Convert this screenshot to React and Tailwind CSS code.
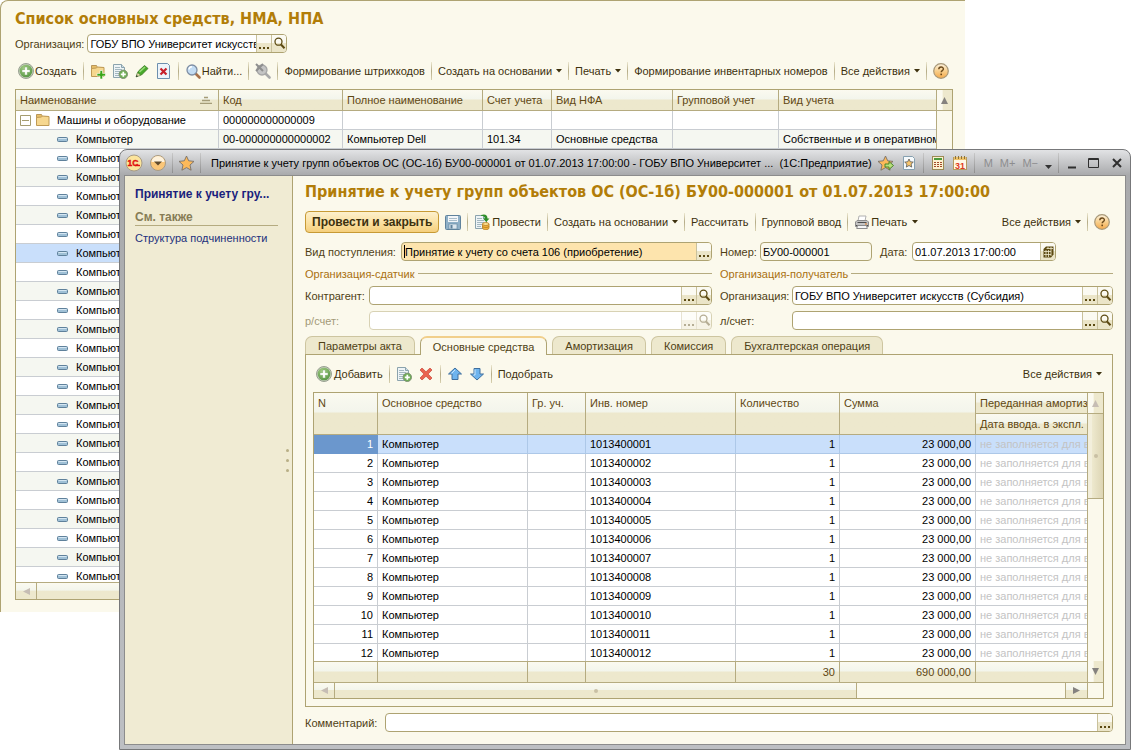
import React from 'react';

/* ---------- icons ---------- */

function PlusIcon() {
  return (
    <svg width="16" height="16" viewBox="0 0 16 16" className="shrink-0">
      <defs>
        <radialGradient id="plusG" cx="0.4" cy="0.3" r="0.8">
          <stop offset="0" stopColor="#a9d088" />
          <stop offset="1" stopColor="#4f9140" />
        </radialGradient>
      </defs>
      <circle cx="8" cy="8" r="7.5" fill="#c3cdb8" stroke="#99a192" />
      <circle cx="8" cy="8" r="6.3" fill="url(#plusG)" />
      <path d="M6.7 4h2.6v2.7H12v2.6H9.3V12H6.7V9.3H4V6.7h2.7z" fill="#fff" stroke="#5f9a4d" strokeWidth="0.4" />
    </svg>
  );
}

function FolderIcon({ plus }) {
  return (
    <svg width="16" height="16" viewBox="0 0 16 16" className="shrink-0">
      <path d="M1.5 12.5v-10h5l1 2h6v8z" fill="#e8bf68" stroke="#b8965a" />
      <path d="M1.5 13.5v-8l5-.5 1-1 6.5.5v9z" fill="#f6d78f" stroke="#bf9a55" />
      {plus && <path d="M10 7.5h2.6v2.9h2.9V13h-2.9v3H10v-3H7v-2.6h3z" fill="#3aa51a" stroke="#fff" strokeWidth="0.6" />}
    </svg>
  );
}

function DocLines({ children }) {
  return (
    <svg width="16" height="16" viewBox="0 0 16 16" className="shrink-0">
      <path d="M1.5 1.5h8l3 3v10h-11z" fill="#eef4f6" stroke="#8ba3ad" />
      <path d="M9.5 1.5v3h3" fill="#cfdde3" stroke="#8ba3ad" />
      <path d="M3 4.5h5M3 6.5h7M3 8.5h7M3 10.5h5M3 12.5h4" stroke="#a3b7c0" />
      {children}
    </svg>
  );
}

function DocPlusIcon() {
  return (
    <DocLines>
      <circle cx="11.3" cy="11.3" r="4.2" fill="#6fae55" stroke="#7f9275" />
      <path d="M11.3 8.8v5M8.8 11.3h5" stroke="#fff" strokeWidth="1.7" />
    </DocLines>
  );
}

function PostIcon() {
  return (
    <DocLines>
      <path d="M7 1c4-1.500 6.500 0 6.500 3.500h2L12.200 8 9 4.500h2C11 3 9.500 2 7 1.800z" fill="#2f8f28" />
      <path d="M8.500 10v4c0 2.200 6.500 2.200 6.500 0v-4z" fill="#efb23e" stroke="#b97c1d" strokeWidth="0.800" />
      <ellipse cx="11.750" cy="10" rx="3.250" ry="1.500" fill="#fbdd8f" stroke="#b97c1d" strokeWidth="0.800" />
      <path d="M8.500 12c0 2 6.500 2 6.500 0" fill="none" stroke="#b97c1d" strokeWidth="0.800" />
    </DocLines>
  );
}

function PencilIcon() {
  return (
    <svg width="16" height="16" viewBox="0 0 16 16" className="shrink-0">
      <path d="M3 11.500L4.500 8l6-5.500L14 5.500 7.500 12z" fill="#46a92a" stroke="#3a7a22" strokeWidth="0.800" />
      <path d="M5.500 9L11 4" stroke="#9bdc7c" strokeWidth="1.600" />
      <path d="M2 14l1.500-4.500L6.800 12.300z" fill="#e9d9b0" stroke="#3a7a22" strokeWidth="0.600" />
      <path d="M2 14l.7-1.900 1.300 1.100z" fill="#222" />
    </svg>
  );
}

function DeleteDocIcon() {
  return (
    <svg width="16" height="16" viewBox="0 0 16 16" className="shrink-0">
      <path d="M1.500 .5h10l2 2v13h-12z" fill="#edf4fa" stroke="#6d8fae" />
      <path d="M4.500 5.500l6 6M10.500 5.500l-6 6" stroke="#c8202a" strokeWidth="2.200" />
    </svg>
  );
}

function FindIcon({ muted }) {
  return (
    <svg width="16" height="16" viewBox="0 0 16 16" className="shrink-0">
      <path d="M10.500 10.500l4 4" stroke={muted ? '#a9a9a9' : '#a8714a'} strokeWidth="2.600" strokeLinecap="round" />
      <circle cx="7" cy="7" r="5" fill={muted ? '#c4c4c4' : '#c3dcf3'} stroke={muted ? '#a6a6a6' : '#7f8ea3'} strokeWidth="1.300" />
      {muted ? (
        <path d="M1 1l7 7M8 1L1 8" stroke="#8f8f8f" strokeWidth="2" />
      ) : (
        <path d="M4 6.500a3 3 0 0 1 3-2.700" stroke="#fff" strokeWidth="1.400" fill="none" />
      )}
    </svg>
  );
}

function HelpIcon() {
  return (
    <svg width="16" height="16" viewBox="0 0 16 16" className="shrink-0">
      <defs>
        <linearGradient id="helpG" x1="0" y1="0" x2="0" y2="1">
          <stop offset="0" stopColor="#fdf3df" />
          <stop offset="0.500" stopColor="#f8cf8c" />
          <stop offset="1" stopColor="#f5a94a" />
        </linearGradient>
      </defs>
      <circle cx="8" cy="8" r="7.300" fill="url(#helpG)" stroke="#a89878" strokeWidth="1.200" />
      <path d="M5.800 6.300c0-3 4.600-2.900 4.600-.3 0 1.600-2.200 1.600-2.200 3.300" stroke="#6b4a1c" strokeWidth="1.400" fill="none" />
      <rect x="7.400" y="10.600" width="1.600" height="1.600" fill="#6b4a1c" />
    </svg>
  );
}

function SaveIcon() {
  return (
    <svg width="16" height="16" viewBox="0 0 16 16" className="shrink-0">
      <rect x="0.500" y="1.500" width="15" height="14" rx="1" fill="#8fb0c7" stroke="#5f829c" />
      <rect x="3" y="2" width="10" height="6" fill="#f2f6f9" />
      <path d="M4 4.500h8M4 6.500h8" stroke="#a9bdca" />
      <rect x="4" y="10" width="8" height="5" fill="#dbe6ee" stroke="#5f829c" strokeWidth="0.600" />
      <rect x="5.500" y="11" width="2" height="3.500" fill="#5f829c" />
    </svg>
  );
}

function PrinterIcon() {
  return (
    <svg width="16" height="16" viewBox="0 0 16 16" className="shrink-0">
      <path d="M4 7l1-5h7l-1 5z" fill="#fff" stroke="#b0b0b0" />
      <path d="M1.500 8L3 6.500h10L14.500 8v4.500h-13z" fill="#c4c4c4" stroke="#8c8c8c" />
      <path d="M3.500 8.500h9M2 11.500h12" stroke="#4f4f4f" />
      <path d="M3.500 11.500h9l.8 3H2.700z" fill="#f6f6f6" stroke="#8c8c8c" />
      <rect x="11" y="9.500" width="2" height="1" fill="#e07a20" />
    </svg>
  );
}

function CrossIcon() {
  return (
    <svg width="16" height="16" viewBox="0 0 16 16" className="shrink-0">
      <path d="M2 4l2-2 4 3.800L12 2l2 2-3.900 4L14 12l-2 2-4-3.800L4 14l-2-2 3.900-4z" fill="#ea6350" stroke="#c9473a" strokeWidth="0.700" />
    </svg>
  );
}

function ArrowIcon({ down }) {
  return (
    <svg width="16" height="16" viewBox="0 0 16 16" className="shrink-0">
      <path
        d={down ? 'M8 14l-6.500-6H5V2.500h6V8h3.500z' : 'M8 2L1.500 8H5v5.500h6V8h3.500z'}
        fill="#6eb4ee"
        stroke="#3f6f9e"
        strokeLinejoin="round"
      />
      <path d={down ? 'M6 3.500V9H4.500' : 'M4.500 7.500L8 4'} stroke="#cbe6fb" fill="none" />
    </svg>
  );
}

function Lens() {
  return (
    <svg width="13" height="13" viewBox="0 0 13 13">
      <circle cx="5.500" cy="4.700" r="3.500" fill="none" stroke="currentColor" strokeWidth="1.300" />
      <path d="M8 7.500l3.500 3.800" stroke="currentColor" strokeWidth="2" />
    </svg>
  );
}

function CalendarGlyph() {
  return (
    <svg width="11" height="12" viewBox="0 0 11 12">
      <path d="M3 .5h7.500v8L8 11.500H.5V3z" fill="#5c4a12" />
      <path d="M1 5.500h7M1 8.500h7M3.500 2.500h6.500M3 4v7M5.500 4v7M5 1v2M8 1v9" stroke="#f3edd3" strokeWidth="0.800" />
    </svg>
  );
}

function Caret() {
  return (
    <svg width="6" height="4" viewBox="0 0 6 4" className="ml-1 shrink-0">
      <path d="M0 0h6L3 3.500z" fill="#3d310e" />
    </svg>
  );
}

function Star({ children, small }) {
  return (
    <svg width="17" height="16" viewBox="0 0 17 16" className="shrink-0">
      {small ? (
        <>
          <path d="M3.500 1.500h9l2 2v11h-11z" fill="#f6fafc" stroke="#86a0b0" />
          <path d="M9 4l1.300 2.800 3 .3-2.200 2 .6 3L9 10.500l-2.700 1.600.6-3-2.200-2 3-.3z" fill="#f8c56c" stroke="#555" strokeWidth="0.800" />
        </>
      ) : (
        <path d="M8.500 1l2.200 4.800 5.300.6-4 3.600 1.100 5.200-4.600-2.600-4.600 2.600L5 10 1 6.400l5.300-.6z" fill="#fcb95a" stroke="#77706a" strokeWidth="0.900" />
      )}
      {children}
    </svg>
  );
}

function ScrollArrow({ dir, muted }) {
  const d = { up: 'M4 0l4 8H0z', down: 'M4 8L0 0h8z', left: 'M0 4l8-4v8z', right: 'M8 4L0 8V0z' }[dir];
  return (
    <svg width="7" height="7" viewBox="0 0 8 8">
      <path d={d} fill={muted ? '#c6bdb4' : '#85827f'} />
    </svg>
  );
}

/* ---------- controls ---------- */

function Sep() {
  return <div className="h-[18px] w-px shrink-0 bg-linear-to-b from-[#ece7cf] via-[#b5ac88] to-[#d8d1b0]" />;
}

function Tool({ icon, label, caret, children, className = '' }) {
  return (
    <button type="button" aria-label={label} className={`flex h-5 shrink-0 items-center whitespace-nowrap text-[#3d310e] ${className}`}>
      {icon}
      {children && <span>{children}</span>}
      {caret && <Caret />}
    </button>
  );
}

const fieldButton =
  'flex h-full w-[15px] shrink-0 items-center justify-center border-l border-[#c9c19c] bg-linear-to-b from-[#fbfaf2] from-45% to-[#ebe5c8] to-50% text-[#5c4a12]';

function Dots() {
  return (
    <svg width="10" height="2" viewBox="0 0 10 2" className="mt-2">
      <path d="M0 0h2v2H0zM4 0h2v2H4zM8 0h2v2H8z" fill="currentColor" />
    </svg>
  );
}

function Field({ id, value = '', dots, lens, calendar, disabled, active, readOnly, className = '' }) {
  return (
    <div
      className={`flex h-[19px] min-w-0 items-center overflow-hidden rounded border ${
        disabled ? 'border-[#d8d2b4]' : 'border-[#aea372]'
      } ${active ? 'bg-[#fde4ad]' : readOnly ? 'bg-[#fbf9ec]' : 'bg-white'} ${className}`}
    >
      {active && <span className="ml-[2px] h-[13px] w-px bg-black" />}
      <input
        id={id}
        defaultValue={value}
        disabled={disabled}
        readOnly={readOnly}
        className={`h-full w-0 min-w-0 flex-1 bg-transparent text-black outline-none ${active ? '' : 'pl-[2px]'}`}
      />
      {dots && (
        <button type="button" disabled={disabled} aria-label="Выбрать" className={`${fieldButton} ${disabled ? 'opacity-45' : ''}`}>
          <Dots />
        </button>
      )}
      {lens && (
        <button type="button" disabled={disabled} aria-label="Открыть" className={`${fieldButton} ${disabled ? 'opacity-45' : ''}`}>
          <Lens />
        </button>
      )}
      {calendar && (
        <button type="button" aria-label="Календарь" className={fieldButton}>
          <CalendarGlyph />
        </button>
      )}
    </div>
  );
}

function Label({ id, children, className = '' }) {
  return (
    <label htmlFor={id} className={`shrink-0 whitespace-nowrap ${className}`}>
      {children}
    </label>
  );
}

const titleText = 'font-[DejaVu_Sans_Condensed,DejaVu_Sans,sans-serif] text-[16px] leading-6 font-bold whitespace-nowrap text-[#b27d08]';
const headFill = 'bg-linear-to-b from-[#fbfaf0] from-0% via-[#f3f5ec] via-45% to-[#ede8cd] to-50%';
const headCell = `${headFill} overflow-hidden whitespace-nowrap border-r border-b border-[#b5ab80] px-1 text-left font-normal text-[#5f4712]`;

/* ---------- list window ---------- */

const listColumns = ['Наименование', 'Код', 'Полное наименование', 'Счет учета', 'Вид НФА', 'Групповой учет', 'Вид учета'];
const listRows = Array.from({ length: 24 }, (_, i) => ({
  name: 'Компьютер',
  cells: i === 0 ? ['00-000000000000002', 'Компьютер Dell', '101.34', 'Основные средства', '', 'Собственные и в оперативном'] : ['', '', '', '', '', ''],
  selected: i === 6,
}));

function ListWindow() {
  const cell = 'h-[19px] overflow-hidden whitespace-nowrap border-r border-b border-[#c9cdd2] px-1';
  return (
    <section className="mr-[166px] rounded-tl-lg border-t border-l border-[#aea372] bg-[#fbf9ec] pt-[6px] pr-3 pb-3 pl-[14px]">
      <h1 className={titleText}>Список основных средств, НМА, НПА</h1>
      <div className="mt-[3px] flex items-center gap-[3px] text-[#4f3f14]">
        <Label id="org">Организация:</Label>
        <Field id="org" value="ГОБУ ВПО Университет искусств (Субсидия)" dots lens className="w-[200px]" />
      </div>
      <div className="mt-2 flex h-5 items-center gap-[6px] pl-[3px]">
        <Tool icon={<PlusIcon />} className="gap-[1px]">Создать</Tool>
        <Sep />
        <Tool icon={<FolderIcon plus />} label="Создать группу" />
        <Tool icon={<DocPlusIcon />} label="Скопировать" />
        <Tool icon={<PencilIcon />} label="Изменить" />
        <Tool icon={<DeleteDocIcon />} label="Пометить на удаление" />
        <Sep />
        <Tool icon={<FindIcon />} className="gap-[1px]">Найти...</Tool>
        <Sep />
        <Tool icon={<FindIcon muted />} label="Отменить поиск" />
        <Sep />
        <Tool>Формирование штрихкодов</Tool>
        <Sep />
        <Tool caret>Создать на основании</Tool>
        <Sep />
        <Tool caret>Печать</Tool>
        <Sep />
        <Tool>Формирование инвентарных номеров</Tool>
        <Sep />
        <Tool caret>Все действия</Tool>
        <Sep />
        <Tool icon={<HelpIcon />} label="Справка" />
      </div>
      <div className="mt-2 border border-[#aea372] bg-white">
        <div className="flex">
          <div className="h-[492px] min-w-0 flex-1 overflow-hidden">
            <table className="w-full table-fixed border-separate border-spacing-0">
              <colgroup>
                <col className="w-[203px]" />
                <col className="w-[124px]" />
                <col className="w-[140px]" />
                <col className="w-[69px]" />
                <col className="w-[121px]" />
                <col className="w-[106px]" />
                <col />
              </colgroup>
              <thead>
                <tr>
                  {listColumns.map((c, i) => (
                    <th key={c} className={`${headCell} h-[21px] last:border-r-0`}>
                      <div className="flex items-center justify-between">
                        {c}
                        {i === 0 && (
                          <svg width="12" height="8" viewBox="0 0 12 8" className="mr-[2px]">
                            <path d="M4 1.500h4M2 4.500h8M0 7.500h12" stroke="#a59c78" strokeWidth="1.500" />
                          </svg>
                        )}
                      </div>
                    </th>
                  ))}
                </tr>
              </thead>
              <tbody>
                <tr>
                  <td className={cell}>
                    <div className="flex items-center">
                      <svg width="11" height="11" viewBox="0 0 11 11" className="mr-1">
                        <path d="M.5 .5h10v10H.5zM2 5.500h7" fill="#fff" stroke="#a59c70" />
                      </svg>
                      <FolderIcon />
                      <span className="ml-[6px]">Машины и оборудование</span>
                    </div>
                  </td>
                  <td className={cell}>000000000000009</td>
                  <td className={cell} />
                  <td className={cell} />
                  <td className={cell} />
                  <td className={cell} />
                  <td className={`${cell} border-r-0`} />
                </tr>
                {listRows.map((r, i) => (
                  <tr key={i} className={r.selected ? 'bg-[#c9dffb]' : i % 2 ? 'bg-white' : 'bg-[#f5f7f1]'}>
                    <td className={cell}>
                      <div className="flex items-center gap-2 pl-[37px]">
                        <svg width="11" height="5" viewBox="0 0 11 5">
                          <rect x="0.500" y="0.500" width="10" height="4" rx="1" fill="#9fc0d6" stroke="#5f819b" />
                          <path d="M1.500 1.500h8" stroke="#d4e6f2" />
                        </svg>
                        {r.name}
                      </div>
                    </td>
                    {r.cells.map((c, j) => (
                      <td key={j} className={`${cell} last:border-r-0 last:pr-0`}>
                        {c}
                      </td>
                    ))}
                  </tr>
                ))}
              </tbody>
            </table>
          </div>
          <div className="flex w-4 flex-col border-l border-[#b5ab80] bg-[#fbf9ec]">
            <button type="button" aria-label="Вверх" className="flex h-[21px] items-center justify-center border-b border-[#b5ab80] bg-linear-to-r from-[#fbfaf0] from-35% to-[#ede8cd] to-40%">
              <ScrollArrow dir="up" />
            </button>
          </div>
        </div>
        <div className={`flex h-[17px] border-t border-[#b5ab80] ${headFill}`}>
          <button type="button" aria-label="Влево" className="flex w-[21px] items-center justify-center border-r border-[#b5ab80]">
            <ScrollArrow dir="left" muted />
          </button>
        </div>
      </div>
    </section>
  );
}

/* ---------- document window ---------- */

function TitleSep() {
  return <div className="h-5 w-px shrink-0 bg-linear-to-b from-[#c8c8c8] to-[#8f8f8f]" />;
}

function TitleBar() {
  return (
    <div className="flex h-[25px] items-center pl-px text-black">
      <svg width="18" height="18" viewBox="0 0 18 18" className="shrink-0">
        <circle cx="9" cy="9" r="8" fill="#fbe49b" stroke="#a79b86" />
        <text x="8" y="12" textAnchor="middle" fontSize="8.500" fontWeight="900" fill="#e01010" stroke="#e01010" strokeWidth="0.400" fontFamily="Liberation Sans">
          1С
        </text>
        <path d="M10 11.500h5" stroke="#e01010" strokeWidth="1.400" />
      </svg>
      <svg width="18" height="18" viewBox="0 0 18 18" className="ml-[6px] shrink-0">
        <circle cx="9" cy="9" r="7.500" fill="#fac678" stroke="#a79b86" />
        <path d="M2.500 8a6.500 6 0 0 1 13 0z" fill="#fef2dc" />
        <path d="M5 7.500h8L9 11.500z" fill="#5f4a2c" />
      </svg>
      <div className="ml-[5px] flex items-center gap-[5px]">
        <TitleSep />
        <button type="button" aria-label="Избранное">
          <Star />
        </button>
        <TitleSep />
      </div>
      <div className="min-w-0 flex-1 overflow-hidden pl-[10px] whitespace-pre">
        Принятие к учету групп объектов ОС (ОС-1б) БУ00-000001 от 01.07.2013 17:00:00 - ГОБУ ВПО Университет ...  (1С:Предприятие)
      </div>
      <div className="flex h-5 shrink-0 items-center gap-[6px]">
        <button type="button" aria-label="Добавить в избранное">
          <Star>
            <path d="M8 9h4V6.500l4.500 4-4.500 4V12H8z" fill="#b9e07c" stroke="#3f7d22" strokeWidth="0.900" />
          </Star>
        </button>
        <button type="button" aria-label="Список избранного">
          <Star small />
        </button>
        <TitleSep />
        <button type="button" aria-label="Калькулятор">
          <svg width="16" height="16" viewBox="0 0 16 16">
            <rect x="2.500" y="1.500" width="11" height="13" fill="#fbf1d0" stroke="#9c8a55" />
            <rect x="4" y="3" width="8" height="2" fill="#4c9a3c" />
            <path d="M4 7.500h2M7 7.500h2M10 7.500h2M4 9.500h2M7 9.500h2M10 9.500h2M4 11.500h2M7 11.500h2M10 11.500h2" stroke="#a34a2a" />
          </svg>
        </button>
        <button type="button" aria-label="Календарь">
          <svg width="16" height="16" viewBox="0 0 16 16">
            <rect x="1.500" y="2.500" width="13" height="12" fill="#fff8e6" stroke="#b59a60" />
            <rect x="2" y="2" width="12" height="3" fill="#efc36a" />
            <path d="M3.500 1v3M6.500 1v3M9.500 1v3M12.500 1v3" stroke="#8a713a" />
            <text x="8" y="13.500" textAnchor="middle" fontSize="9" fontWeight="700" fill="#df3a22" fontFamily="Liberation Sans">
              31
            </text>
          </svg>
        </button>
        <TitleSep />
        <div className="flex items-center gap-[7px] pl-[3px] text-[#8d8d8f]">
          <button type="button">M</button>
          <button type="button">M+</button>
          <button type="button">M−</button>
          <svg width="7" height="4" viewBox="0 0 7 4" className="mt-2">
            <path d="M0 0h7L3.500 4z" fill="#333" />
          </svg>
        </div>
        <TitleSep />
        <button type="button" aria-label="Свернуть" className="px-[3px]">
          <svg width="8" height="12" viewBox="0 0 8 12">
            <path d="M0 10.500h8" stroke="#2f2f2f" strokeWidth="2" />
          </svg>
        </button>
        <button type="button" aria-label="Развернуть" className="px-[3px]">
          <svg width="11" height="10" viewBox="0 0 11 10">
            <path d="M.5 .5h10v9H.5zM.5 1.500h10" fill="none" stroke="#2f2f2f" />
          </svg>
        </button>
        <button type="button" aria-label="Закрыть" className="px-1">
          <svg width="10" height="10" viewBox="0 0 10 10">
            <path d="M1 1l8 8M9 1L1 9" stroke="#2f2f2f" strokeWidth="2" />
          </svg>
        </button>
      </div>
    </div>
  );
}

function Legend({ children }) {
  return (
    <div className="flex h-[13px] items-center gap-[3px] whitespace-nowrap text-[#a9700f]">
      {children}
      <div className="h-px flex-1 bg-[#b5ab80]" />
    </div>
  );
}

const tabs = ['Параметры акта', 'Основные средства', 'Амортизация', 'Комиссия', 'Бухгалтерская операция'];

function ItemColumns() {
  return (
    <colgroup>
      <col className="w-16" />
      <col className="w-[150px]" />
      <col className="w-[58px]" />
      <col className="w-[150px]" />
      <col className="w-[104px]" />
      <col className="w-[136px]" />
      <col />
    </colgroup>
  );
}

function ItemsTable() {
  const cell = 'h-[19px] overflow-hidden whitespace-nowrap border-r border-b px-1';
  return (
    <div className="mt-2 border border-[#aea372] bg-white text-black">
      <div className="flex">
        <div className="min-w-0 flex-1">
          <div className="h-[268px] overflow-hidden">
            <table className="w-full table-fixed border-separate border-spacing-0">
              <ItemColumns />
              <thead>
                <tr>
                  {['N', 'Основное средство', 'Гр. уч.', 'Инв. номер', 'Количество', 'Сумма'].map((c) => (
                    <th key={c} rowSpan={2} className={`${headCell} h-[42px] pt-1 align-top leading-[13px]`}>
                      {c}
                    </th>
                  ))}
                  <th className={`${headCell} h-[21px] border-r-0`}>Переданная амортизация</th>
                </tr>
                <tr>
                  <th className={`${headCell} h-[21px] border-r-0`}>Дата ввода. в экспл.</th>
                </tr>
              </thead>
              <tbody>
                {Array.from({ length: 12 }, (_, i) => {
                  const c = `${cell} ${i === 0 ? 'border-[#adc8e8] bg-[#c9dffb]' : 'border-[#c9cdd2]'}`;
                  return (
                    <tr key={i}>
                      <td className={i === 0 ? `${cell} border-[#6b97cd] bg-[#6b97cd] text-right text-white` : `${c} text-right`}>{i + 1}</td>
                      <td className={c}>Компьютер</td>
                      <td className={c} />
                      <td className={c}>{1013400001 + i}</td>
                      <td className={`${c} text-right`}>1</td>
                      <td className={`${c} text-right`}>23 000,00</td>
                      <td className={`${c} border-r-0 text-[#c3c3c3]`}>не заполняется для ведомости</td>
                    </tr>
                  );
                })}
              </tbody>
            </table>
          </div>
          <table className="w-full table-fixed border-separate border-spacing-0 border-t border-[#b5ab80] text-[#5f4712]">
            <ItemColumns />
            <tbody>
              <tr>
                {['', '', '', '', '30', '690 000,00', ''].map((c, i) => (
                  <td key={i} className={`${headFill} h-5 border-r border-[#b5ab80] px-1 text-right last:border-r-0`}>
                    {c}
                  </td>
                ))}
              </tr>
            </tbody>
          </table>
        </div>
        <div className="flex w-4 flex-col border-l border-[#b5ab80] bg-[#fbf9ec]">
          <button type="button" aria-label="Вверх" className="flex h-[21px] items-center justify-center border-b border-[#b5ab80] bg-linear-to-r from-[#fbfaf0] from-35% to-[#ede8cd] to-40%">
            <ScrollArrow dir="up" muted />
          </button>
          <div className="flex h-[85px] items-center justify-center border-b border-[#b5ab80] bg-linear-to-r from-[#f3efdc] from-25% via-[#ede8cd] via-30% to-[#ddd5b4]">
            <span className="size-1 rounded-full bg-[#c9c0a4]" />
          </div>
          <div className="flex-1" />
          <button type="button" aria-label="Вниз" className="flex h-[21px] items-center justify-center bg-linear-to-r from-[#fbfaf0] from-35% to-[#ede8cd] to-40%">
            <ScrollArrow dir="down" />
          </button>
        </div>
      </div>
      <div className="flex h-4 border-t border-[#b5ab80] bg-[#fbf9ec]">
        <button type="button" aria-label="Влево" className={`flex w-[21px] items-center justify-center border-r border-[#b5ab80] ${headFill}`}>
          <ScrollArrow dir="left" muted />
        </button>
        <div className={`flex w-[522px] items-center justify-center border-r border-[#b5ab80] ${headFill}`}>
          <span className="size-1 rounded-full bg-[#c9c0a4]" />
        </div>
        <div className="flex-1" />
        <button type="button" aria-label="Вправо" className={`flex w-[22px] items-center justify-center border-l border-[#b5ab80] ${headFill}`}>
          <ScrollArrow dir="right" />
        </button>
        <div className="w-4 border-l border-[#b5ab80]" />
      </div>
    </div>
  );
}

function DocumentWindow() {
  return (
    <section className="absolute top-[149px] right-0 left-[119px] rounded-t-lg border border-[#77787a] bg-linear-to-b from-[#e2e3e5] from-0% via-[#a9aaac] via-[25px] to-[#bdbfc3] px-1 pb-1">
      <TitleBar />
      <div className="flex border border-[#8c8c8c] bg-[#fbf9ec]">
        <aside className="flex w-[168px] shrink-0 border-r border-[#aea372] bg-[#f0ebd3]">
          <div className="min-w-0 flex-1 pt-[10px] pl-[10px]">
            <div className="truncate text-[12px] leading-4 font-bold text-[#1b1f7d]">Принятие к учету гру...</div>
            <div className="mt-2 w-[143px] border-b border-[#b5ab80] text-[12px] leading-[15px] font-bold text-[#877c55]">См. также</div>
            <a href="#structure" className="mt-1 block whitespace-nowrap text-[#22307c]">
              Структура подчиненности
            </a>
          </div>
          <div className="flex w-[9px] flex-col items-center justify-center gap-[7px]">
            <span className="size-[3px] rounded-full bg-[#b8ae86]" />
            <span className="size-[3px] rounded-full bg-[#b8ae86]" />
            <span className="size-[3px] rounded-full bg-[#b8ae86]" />
          </div>
        </aside>
        <main className="min-w-0 flex-1 px-3 pb-3 text-[#4f3f14]">
          <h2 className={`pt-1 ${titleText}`}>
            Принятие к учету групп объектов ОС (ОС-1б) БУ00-000001 от 01.07.2013 17:00:00
          </h2>
          <div className="mt-[7px] flex h-[22px] items-center gap-[6px]">
            <button
              type="button"
              className="h-[22px] shrink-0 rounded border border-[#c79a35] bg-linear-to-b from-[#fdf0cc] from-0% via-[#fbe2a4] via-50% to-[#f5cf7c] px-[6px] text-[12px] font-bold whitespace-nowrap text-[#3d310e]"
            >
              Провести и закрыть
            </button>
            <Tool icon={<SaveIcon />} label="Записать" />
            <Sep />
            <Tool icon={<PostIcon />} className="gap-[2px]">Провести</Tool>
            <Sep />
            <Tool caret>Создать на основании</Tool>
            <Sep />
            <Tool>Рассчитать</Tool>
            <Sep />
            <Tool>Групповой ввод</Tool>
            <Sep />
            <Tool icon={<PrinterIcon />} caret className="gap-[1px]">Печать</Tool>
            <div className="flex-1" />
            <Tool caret>Все действия</Tool>
            <Sep />
            <Tool icon={<HelpIcon />} label="Справка" className="mr-[3px]" />
          </div>
          <div className="mt-[9px] grid grid-cols-[407fr_393fr] gap-x-2 gap-y-[6px]">
            <div className="flex items-center">
              <Label id="kind" className="w-24">Вид поступления:</Label>
              <Field id="kind" value="Принятие к учету со счета 106 (приобретение)" active dots className="flex-1" />
            </div>
            <div className="flex items-center">
              <Label id="num" className="w-10">Номер:</Label>
              <Field id="num" value="БУ00-000001" readOnly className="w-[112px]" />
              <Label id="date" className="ml-2 w-8">Дата:</Label>
              <Field id="date" value="01.07.2013 17:00:00" calendar className="w-[144px]" />
            </div>
            <Legend>Организация-сдатчик</Legend>
            <Legend>Организация-получатель</Legend>
            <div className="flex items-center">
              <Label id="contr" className="w-16">Контрагент:</Label>
              <Field id="contr" dots lens className="flex-1" />
            </div>
            <div className="flex items-center">
              <Label id="org2" className="w-[72px]">Организация:</Label>
              <Field id="org2" value="ГОБУ ВПО Университет искусств (Субсидия)" dots lens className="flex-1" />
            </div>
            <div className="flex items-center">
              <Label id="rs" className="w-16 text-[#a39a78]">р/счет:</Label>
              <Field id="rs" disabled dots lens className="flex-1" />
            </div>
            <div className="flex items-center">
              <Label id="ls" className="w-[72px]">л/счет:</Label>
              <Field id="ls" dots lens className="flex-1" />
            </div>
          </div>
          <div role="tablist" className="relative z-10 mt-[6px] flex gap-[5px]">
            {tabs.map((t, i) => (
              <button
                key={t}
                type="button"
                role="tab"
                aria-selected={i === 1}
                className={
                  i === 1
                    ? '-mb-px h-[19px] rounded-t-[7px] border border-t-2 border-b-0 border-[#aea372] border-t-[#f1cf8b] bg-[#fbf9ec] px-3'
                    : 'h-[18px] rounded-t-[7px] border border-b-0 border-[#cdc5a0] bg-[#ede8cd] px-3'
                }
              >
                {t}
              </button>
            ))}
          </div>
          <div className="border border-[#aea372] pt-[9px] pr-2 pb-[7px] pl-[7px]">
            <div className="flex h-5 items-center gap-[6px] pl-[3px]">
              <Tool icon={<PlusIcon />} className="gap-[2px]">Добавить</Tool>
              <Sep />
              <Tool icon={<DocPlusIcon />} label="Скопировать" />
              <Tool icon={<CrossIcon />} label="Удалить" />
              <Sep />
              <Tool icon={<ArrowIcon />} label="Переместить вверх" />
              <Tool icon={<ArrowIcon down />} label="Переместить вниз" />
              <Sep />
              <Tool>Подобрать</Tool>
              <div className="flex-1" />
              <Tool caret className="mr-[2px]">Все действия</Tool>
            </div>
            <ItemsTable />
          </div>
          <div className="mt-[6px] flex items-center">
            <Label id="comment" className="w-20">Комментарий:</Label>
            <Field id="comment" dots className="flex-1" />
          </div>
        </main>
      </div>
    </section>
  );
}

export default function App() {
  return (
    <div className="relative min-h-screen overflow-hidden bg-white font-[Liberation_Sans,Arial,sans-serif] text-[11px] leading-4 text-black">
      <ListWindow />
      <DocumentWindow />
    </div>
  );
}
